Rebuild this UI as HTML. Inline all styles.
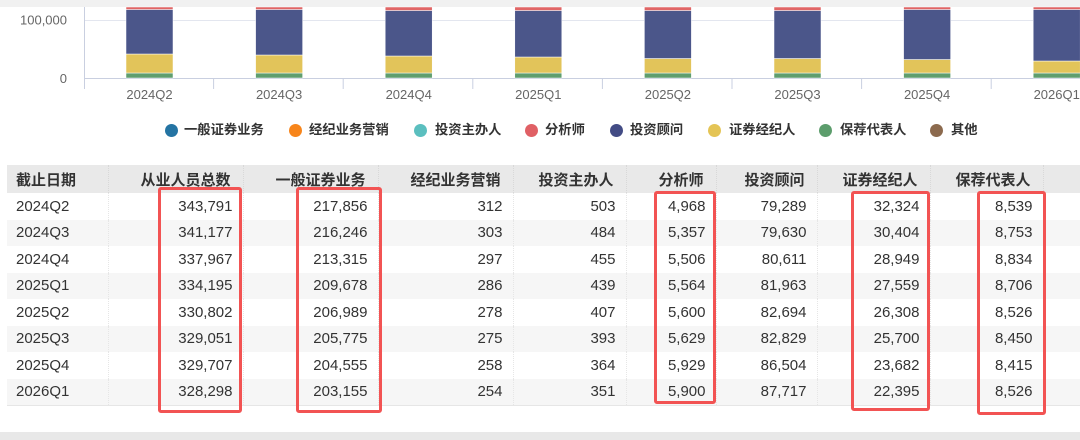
<!DOCTYPE html>
<html><head><meta charset="utf-8"><style>
*{margin:0;padding:0;box-sizing:border-box}
body{width:1080px;height:440px;overflow:hidden;background:#fff;font-family:"Liberation Sans","Noto Sans CJK SC",sans-serif;position:relative;color:#333}
.abs{position:absolute}
.dot{position:absolute;top:123.5px;width:13px;height:13px;border-radius:50%}
.lt{position:absolute;top:121px;font-size:13.3px;font-weight:bold;color:#333;white-space:nowrap;line-height:18px}
table{position:absolute;left:7px;top:165px;border-collapse:collapse;font-size:15px;table-layout:fixed;width:1073px}
th{height:28px;background:#e9e9e9;font-weight:bold;text-align:right;padding-right:12px;color:#333;font-size:15px;border-right:1px dotted #d8d8d8;white-space:nowrap}
td{height:26.5px;text-align:right;padding-right:10px;border-right:1px dotted #e6e6e6;color:#333}
tr:nth-child(odd) td{background:#f6f6f6}
th:first-child,td:first-child{text-align:left;padding-left:9px}
.rb{position:absolute;border:3px solid #f25353;border-radius:3px}
</style></head><body>
<div class="abs" style="left:0;top:0;width:1080px;height:7px;background:#f1f1f1"></div>
<svg class="abs" style="left:0;top:0" width="1080" height="110">
<line x1="84" y1="20.5" x2="1080" y2="20.5" stroke="#e3e6ef"/>
<line x1="84" y1="78.5" x2="1080" y2="78.5" stroke="#c9cfe0"/>
<line x1="84.5" y1="7" x2="84.5" y2="89" stroke="#c9cfe0"/>
<g stroke="#c9cfe0"><line x1="213.6" y1="78" x2="213.6" y2="89"/><line x1="343.2" y1="78" x2="343.2" y2="89"/><line x1="472.8" y1="78" x2="472.8" y2="89"/><line x1="602.4" y1="78" x2="602.4" y2="89"/><line x1="732" y1="78" x2="732" y2="89"/><line x1="861.6" y1="78" x2="861.6" y2="89"/><line x1="991.2" y1="78" x2="991.2" y2="89"/></g>
<g font-size="13" fill="#666" text-anchor="end"><text x="67" y="24.5">100,000</text><text x="67" y="83">0</text></g>
<g font-size="13" fill="#666" text-anchor="middle">
<text x="149.5" y="99">2024Q2</text><text x="279.1" y="99">2024Q3</text><text x="408.7" y="99">2024Q4</text><text x="538.3" y="99">2025Q1</text><text x="667.9" y="99">2025Q2</text><text x="797.5" y="99">2025Q3</text><text x="927.1" y="99">2025Q4</text><text x="1056.7" y="99">2026Q1</text></g>
<g stroke="#fff" stroke-width="0.5">
<rect x="126" y="73" width="47" height="5" fill="#5f9e6e"/><rect x="126" y="54" width="47" height="19" fill="#e2c45a"/><rect x="126" y="9.5" width="47" height="44.5" fill="#4b568a"/><rect x="126" y="7" width="47" height="2.5" fill="#e06565"/>
<rect x="255.6" y="73" width="47" height="5" fill="#5f9e6e"/><rect x="255.6" y="55" width="47" height="18" fill="#e2c45a"/><rect x="255.6" y="9.5" width="47" height="45.5" fill="#4b568a"/><rect x="255.6" y="7" width="47" height="2.5" fill="#e06565"/>
<rect x="385.2" y="73" width="47" height="5" fill="#5f9e6e"/><rect x="385.2" y="56" width="47" height="17" fill="#e2c45a"/><rect x="385.2" y="10.5" width="47" height="45.5" fill="#4b568a"/><rect x="385.2" y="7" width="47" height="3.5" fill="#e06565"/>
<rect x="514.8" y="73" width="47" height="5" fill="#5f9e6e"/><rect x="514.8" y="57" width="47" height="16" fill="#e2c45a"/><rect x="514.8" y="10.5" width="47" height="46.5" fill="#4b568a"/><rect x="514.8" y="7" width="47" height="3.5" fill="#e06565"/>
<rect x="644.4" y="73" width="47" height="5" fill="#5f9e6e"/><rect x="644.4" y="58.5" width="47" height="14.5" fill="#e2c45a"/><rect x="644.4" y="10.5" width="47" height="48" fill="#4b568a"/><rect x="644.4" y="7" width="47" height="3.5" fill="#e06565"/>
<rect x="774" y="73" width="47" height="5" fill="#5f9e6e"/><rect x="774" y="58.5" width="47" height="14.5" fill="#e2c45a"/><rect x="774" y="10.5" width="47" height="48" fill="#4b568a"/><rect x="774" y="7" width="47" height="3.5" fill="#e06565"/>
<rect x="903.6" y="73" width="47" height="5" fill="#5f9e6e"/><rect x="903.6" y="59.5" width="47" height="13.5" fill="#e2c45a"/><rect x="903.6" y="9.5" width="47" height="50" fill="#4b568a"/><rect x="903.6" y="7" width="47" height="2.5" fill="#e06565"/>
<rect x="1033.2" y="73" width="47" height="5" fill="#5f9e6e"/><rect x="1033.2" y="61" width="47" height="12" fill="#e2c45a"/><rect x="1033.2" y="9.5" width="47" height="51.5" fill="#4b568a"/><rect x="1033.2" y="7" width="47" height="2.5" fill="#e06565"/>
</g>
</svg>
<div class="dot" style="left:164.5px;background:#2474a3"></div><div class="lt" style="left:184px">一般证券业务</div>
<div class="dot" style="left:288.5px;background:#f7851b"></div><div class="lt" style="left:309px">经纪业务营销</div>
<div class="dot" style="left:413.5px;background:#5bbfbf"></div><div class="lt" style="left:435px">投资主办人</div>
<div class="dot" style="left:524.5px;background:#e06065"></div><div class="lt" style="left:545px">分析师</div>
<div class="dot" style="left:609.5px;background:#434c85"></div><div class="lt" style="left:630px">投资顾问</div>
<div class="dot" style="left:707.5px;background:#e4c455"></div><div class="lt" style="left:729px">证券经纪人</div>
<div class="dot" style="left:818.5px;background:#5c9d6c"></div><div class="lt" style="left:840px">保荐代表人</div>
<div class="dot" style="left:929.5px;background:#8c6a4e"></div><div class="lt" style="left:951px">其他</div>
<table>
<colgroup><col style="width:101px"><col style="width:135px"><col style="width:135px"><col style="width:135px"><col style="width:113px"><col style="width:90px"><col style="width:101px"><col style="width:113px"><col style="width:113px"><col style="width:37px"></colgroup>
<tr><th>截止日期</th><th>从业人员总数</th><th>一般证券业务</th><th>经纪业务营销</th><th>投资主办人</th><th>分析师</th><th>投资顾问</th><th>证券经纪人</th><th>保荐代表人</th><th></th></tr>
<tr><td>2024Q2</td><td>343,791</td><td>217,856</td><td>312</td><td>503</td><td>4,968</td><td>79,289</td><td>32,324</td><td>8,539</td><td></td></tr>
<tr><td>2024Q3</td><td>341,177</td><td>216,246</td><td>303</td><td>484</td><td>5,357</td><td>79,630</td><td>30,404</td><td>8,753</td><td></td></tr>
<tr><td>2024Q4</td><td>337,967</td><td>213,315</td><td>297</td><td>455</td><td>5,506</td><td>80,611</td><td>28,949</td><td>8,834</td><td></td></tr>
<tr><td>2025Q1</td><td>334,195</td><td>209,678</td><td>286</td><td>439</td><td>5,564</td><td>81,963</td><td>27,559</td><td>8,706</td><td></td></tr>
<tr><td>2025Q2</td><td>330,802</td><td>206,989</td><td>278</td><td>407</td><td>5,600</td><td>82,694</td><td>26,308</td><td>8,526</td><td></td></tr>
<tr><td>2025Q3</td><td>329,051</td><td>205,775</td><td>275</td><td>393</td><td>5,629</td><td>82,829</td><td>25,700</td><td>8,450</td><td></td></tr>
<tr><td>2025Q4</td><td>329,707</td><td>204,555</td><td>258</td><td>364</td><td>5,929</td><td>86,504</td><td>23,682</td><td>8,415</td><td></td></tr>
<tr><td>2026Q1</td><td>328,298</td><td>203,155</td><td>254</td><td>351</td><td>5,900</td><td>87,717</td><td>22,395</td><td>8,526</td><td></td></tr>
</table>
<div class="abs" style="left:7px;top:405px;width:1073px;height:1px;background:#e6e6e6"></div>
<div class="rb" style="left:158px;top:187px;width:84px;height:226px"></div>
<div class="rb" style="left:296px;top:187px;width:86px;height:226px"></div>
<div class="rb" style="left:654px;top:191px;width:62px;height:213px"></div>
<div class="rb" style="left:851px;top:191px;width:79px;height:220px"></div>
<div class="rb" style="left:977px;top:191px;width:69px;height:224px"></div>
<div class="abs" style="left:0;top:432px;width:1080px;height:8px;background:#e8e8e8"></div>
</body></html>
